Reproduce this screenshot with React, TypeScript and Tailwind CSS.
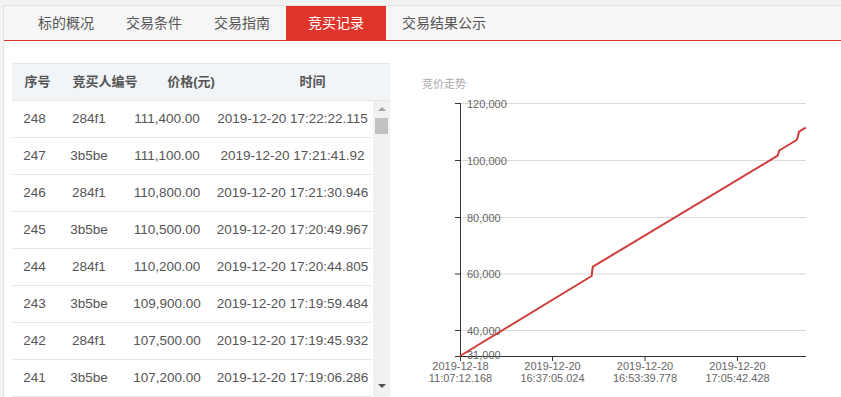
import React from "react";

const FONT = { fontFamily: '"Liberation Sans", "Noto Sans CJK SC", sans-serif' };

const tabs = ["标的概况", "交易条件", "交易指南", "竞买记录", "交易结果公示"];

const rows = [
  ["248", "284f1", "111,400.00", "2019-12-20 17:22:22.115"],
  ["247", "3b5be", "111,100.00", "2019-12-20 17:21:41.92"],
  ["246", "284f1", "110,800.00", "2019-12-20 17:21:30.946"],
  ["245", "3b5be", "110,500.00", "2019-12-20 17:20:49.967"],
  ["244", "284f1", "110,200.00", "2019-12-20 17:20:44.805"],
  ["243", "3b5be", "109,900.00", "2019-12-20 17:19:59.484"],
  ["242", "284f1", "107,500.00", "2019-12-20 17:19:45.932"],
  ["241", "3b5be", "107,200.00", "2019-12-20 17:19:06.286"],
];

function BidTable() {
  return (
    <div className="w-[378px] shrink-0">
      {/* 表头 */}
      <div className="flex h-[38px] items-center border-y border-[#e6e6e6] bg-[#f2f5f8] text-[13px] font-bold text-[#555]">
        <div className="w-[51px] text-center">序号</div>
        <div className="w-[84px] text-center">竞买人编号</div>
        <div className="w-[88px] text-center">价格(元)</div>
        <div className="flex-1 text-center">时间</div>
      </div>
      {/* 表体 */}
      <div className="flex">
        <div className="w-[360px]">
          {rows.map((r) => (
            <div
              key={r[0]}
              className="flex h-[37px] items-center border-b border-[#e6e6e6] text-[13.5px] text-[#555]"
            >
              <div className="w-[45px] text-center">{r[0]}</div>
              <div className="w-[64px] text-center">{r[1]}</div>
              <div className="w-[92px] text-center">{r[2]}</div>
              <div className="flex-1 text-center">{r[3]}</div>
            </div>
          ))}
        </div>
        {/* 滚动条 */}
        <div className="ml-px flex w-[17px] flex-col items-center bg-[#f1f1f1]">
          <div className="mt-[6px] h-0 w-0 border-x-[4px] border-b-[4px] border-x-transparent border-b-[#a3a3a3]" />
          <div className="mt-[7px] h-[16px] w-[13px] bg-[#c1c1c1]" />
          <div className="mt-auto mb-[9px] h-0 w-0 border-x-[4px] border-t-[4px] border-x-transparent border-t-[#505050]" />
        </div>
      </div>
    </div>
  );
}

function PriceChart() {
  const grid = [
    { y: 103.5, label: "120,000" },
    { y: 160.5, label: "100,000" },
    { y: 217.5, label: "80,000" },
    { y: 274, label: "60,000" },
    { y: 330.5, label: "40,000" },
  ];
  const xTicks = [
    { x: 460.5, d: "2019-12-18", t: "11:07:12.168" },
    { x: 552.5, d: "2019-12-20", t: "16:37:05.024" },
    { x: 645, d: "2019-12-20", t: "16:53:39.778" },
    { x: 737.5, d: "2019-12-20", t: "17:05:42.428" },
  ];
  const pts =
    "460,356 591.7,276 592.3,270 592.9,266.7 777.7,155.7 779,151 780,150 796.7,140 798,136 799,131.7 805.7,127.7";
  return (
    <svg
      width="431"
      height="334"
      viewBox="410 63 431 334"
      className="ml-[20px] shrink-0"
      style={FONT}
    >
      <text x="422" y="88" fontSize="11" fill="#aaa">
        竞价走势
      </text>
      {grid.map((g) => (
        <line key={g.label} x1="460" x2="806" y1={g.y} y2={g.y} stroke="#d9d9d9" />
      ))}
      {/* 坐标轴 */}
      <line x1="460.5" x2="460.5" y1="103" y2="356" stroke="#333" />
      <line x1="460" x2="806" y1="356.5" y2="356.5" stroke="#333" />
      {[...grid.map((g) => g.y), 356.5].map((y) => (
        <line key={y} x1="455" x2="460" y1={y} y2={y} stroke="#333" />
      ))}
      {xTicks.map((t) => (
        <line key={t.x} x1={t.x} x2={t.x} y1="356" y2="361" stroke="#333" />
      ))}
      {[...grid, { y: 355, label: "31,000" }].map((g) => (
        <text key={g.label} x="467" y={g.y + 4} fontSize="11" fill="#666">
          {g.label}
        </text>
      ))}
      {xTicks.map((t) => (
        <text key={t.t} x={t.x} textAnchor="middle" fontSize="11" fill="#666">
          <tspan x={t.x} y="370">
            {t.d}
          </tspan>
          <tspan x={t.x} y="381.5">
            {t.t}
          </tspan>
        </text>
      ))}
      <polyline
        points={pts}
        fill="none"
        stroke="#cf3c37"
        strokeWidth="2"
        strokeLinejoin="round"
      />
    </svg>
  );
}

export default function App() {
  return (
    <div className="min-h-[397px] bg-[#f3f3f3] pt-[5px] pl-[3px]" style={FONT}>
      <div className="min-h-[392px] border-l border-t border-[#e2e2e2] bg-white">
        {/* 标签页 */}
        <div className="flex h-[35px] border-b border-[#e0352b] bg-[#f6f6f6] pl-[18px] text-[14px]">
          {tabs.map((t) => (
            <div
              key={t}
              className={
                t === "竞买记录"
                  ? "flex items-center bg-[#e0352b] px-[22px] text-white"
                  : "flex items-center px-4 text-[#555]"
              }
            >
              {t}
            </div>
          ))}
        </div>
        {/* 内容 */}
        <div className="flex pt-[22px] pl-[8px]">
          <BidTable />
          <PriceChart />
        </div>
      </div>
    </div>
  );
}
